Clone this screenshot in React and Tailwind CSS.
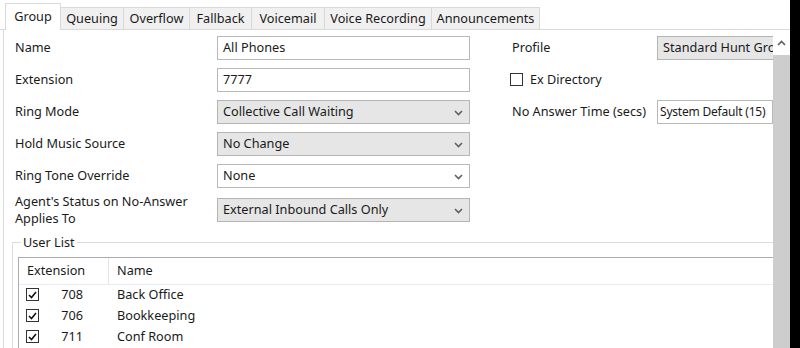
import React from "react";

const font = { fontFamily: '"Noto Sans", "Open Sans", sans-serif' };

function Chevron() {
  return (
    <svg width="9" height="6" viewBox="0 0 9 6" className="absolute right-[6px] top-[9px]">
      <path d="M1 1 L4.5 4.5 L8 1" fill="none" stroke="#606060" strokeWidth="1.6" />
    </svg>
  );
}

function TextBox({ value, className = "" }) {
  return (
    <div className={`h-[24px] border border-[#b9b9b9] bg-white flex items-center whitespace-nowrap overflow-hidden ${className}`}>
      {value}
    </div>
  );
}

function Combo({ value, white = false }) {
  return (
    <div
      className={`relative h-[24px] w-[253px] border flex items-center pl-[5px] whitespace-nowrap ${
        white ? "bg-white border-[#b9b9b9]" : "bg-[#e6e6e6] border-[#b4b4b4]"
      }`}
    >
      {value}
      <Chevron />
    </div>
  );
}

function Check() {
  return (
    <div className="w-[13px] h-[13px] border border-[#333] bg-white flex items-center justify-center shrink-0">
      <svg width="9" height="8" viewBox="0 0 9 8">
        <path d="M1 4 L3.5 6.5 L8 1" fill="none" stroke="#111" strokeWidth="1.6" />
      </svg>
    </div>
  );
}

const tabs = ["Queuing", "Overflow", "Fallback", "Voicemail", "Voice Recording", "Announcements"];
const tabW = [63, 66, 62, 73, 107, 108];

const rows = [
  ["Name", <TextBox value="All Phones" className="w-[253px] pl-[5px]" />],
  ["Extension", <TextBox value="7777" className="w-[253px] pl-[5px]" />],
  ["Ring Mode", <Combo value="Collective Call Waiting" />],
  ["Hold Music Source", <Combo value="No Change" />],
  ["Ring Tone Override", <Combo value="None" white />],
];

const users = [
  ["708", "Back Office"],
  ["706", "Bookkeeping"],
  ["711", "Conf Room"],
];

export default function App() {
  return (
    <div className="w-[800px] h-[348px] overflow-hidden bg-white flex text-[12.7px] text-[#1a1a1a]" style={font}>
      <div className="w-[790px] h-full flex flex-col">
        {/* tab strip */}
        <div className="h-[30px] flex items-end pl-[5px] border-b border-[#d9d9d9] relative">
          <div className="relative z-10 -mb-px h-[27px] w-[56px] bg-white border border-b-0 border-[#d9d9d9] flex items-start justify-center pt-[3px]">
            Group
          </div>
          {tabs.map((t, i) => (
            <div
              key={t}
              style={{ width: tabW[i] }}
              className="h-[22px] bg-[#f0f0f0] border border-b-0 border-l-0 border-[#d9d9d9] flex items-center justify-center whitespace-nowrap"
            >
              {t}
            </div>
          ))}
        </div>
        {/* panel */}
        <div className="flex-1 flex ml-[3px] border-l border-[#d9d9d9] min-h-0">
          <div className="flex-1 min-w-0 overflow-hidden flex flex-col">
            <div className="flex pt-[6px]">
              {/* left column */}
              <div className="w-[480px] shrink-0 flex flex-col gap-[8px]">
                {rows.map(([label, ctl]) => (
                  <div key={label} className="flex items-center h-[24px]">
                    <div className="w-[213px] pl-[11px] whitespace-nowrap">{label}</div>
                    {ctl}
                  </div>
                ))}
                <div className="flex items-center h-[34px] -mt-[3px]">
                  <div className="w-[213px] pl-[11px] leading-[17px] whitespace-nowrap">
                    Agent's Status on No-Answer
                    <br />
                    Applies To
                  </div>
                  <Combo value="External Inbound Calls Only" />
                </div>
              </div>
              {/* right column */}
              <div className="flex-1 min-w-0 flex flex-col gap-[8px]">
                <div className="flex items-center h-[24px]">
                  <div className="w-[173px] shrink-0 pl-[28px]">Profile</div>
                  <div className="h-[24px] w-[140px] bg-[#e6e6e6] border border-[#b4b4b4] flex items-center pl-[5px] whitespace-nowrap shrink-0">
                    Standard Hunt Group
                  </div>
                </div>
                <div className="flex items-center h-[24px]">
                  <div className="pl-[26px] flex items-center gap-[7px]">
                    <div className="w-[13px] h-[13px] border border-[#333] bg-white" />
                    Ex Directory
                  </div>
                </div>
                <div className="flex items-center h-[24px]">
                  <div className="w-[173px] shrink-0 pl-[28px] whitespace-nowrap">No Answer Time (secs)</div>
                  <TextBox value="System Default (15)" className="w-[116px] shrink-0 pl-[2px] text-[12px] tracking-[-0.2px]" />
                </div>
              </div>
            </div>
            {/* User list group box */}
            <div className="relative mt-[15px] ml-[8px] flex-1 border-l border-t border-[#dcdcdc]">
              <div className="absolute -top-[10px] left-[8px] bg-white px-[2px] leading-[18px]">User List</div>
              <div className="mt-[14px] ml-[5px] border-t border-l border-[#abadb3] h-full">
                <div className="flex h-[27px] border-b border-[#e8eef6]">
                  <div className="w-[90px] border-r border-[#e5e5e5] flex items-center pl-[8px]">Extension</div>
                  <div className="flex items-center pl-[8px]">Name</div>
                </div>
                <div className="flex flex-col -mt-[1px]">
                  {users.map(([ext, name]) => (
                    <div key={ext} className="flex items-center h-[21px] leading-none">
                      <div className="w-[90px] flex items-center pl-[7px]">
                        <Check />
                        <div className="w-[44px] text-right">{ext}</div>
                      </div>
                      <div className="pl-[8px]">{name}</div>
                    </div>
                  ))}
                </div>
              </div>
            </div>
          </div>
          {/* scrollbar */}
          <div className="w-[17px] flex flex-col bg-[#f0f0f0]">
            <div className="h-[25px] flex items-center justify-center bg-white">
              <svg width="9" height="6" viewBox="0 0 9 6">
                <path d="M1 5 L4.5 1.5 L8 5" fill="none" stroke="#606060" strokeWidth="1.6" />
              </svg>
            </div>
            <div className="flex-1 bg-[#cdcdcd]" />
          </div>
        </div>
      </div>
      <div className="w-[10px] h-full bg-black" />
    </div>
  );
}
